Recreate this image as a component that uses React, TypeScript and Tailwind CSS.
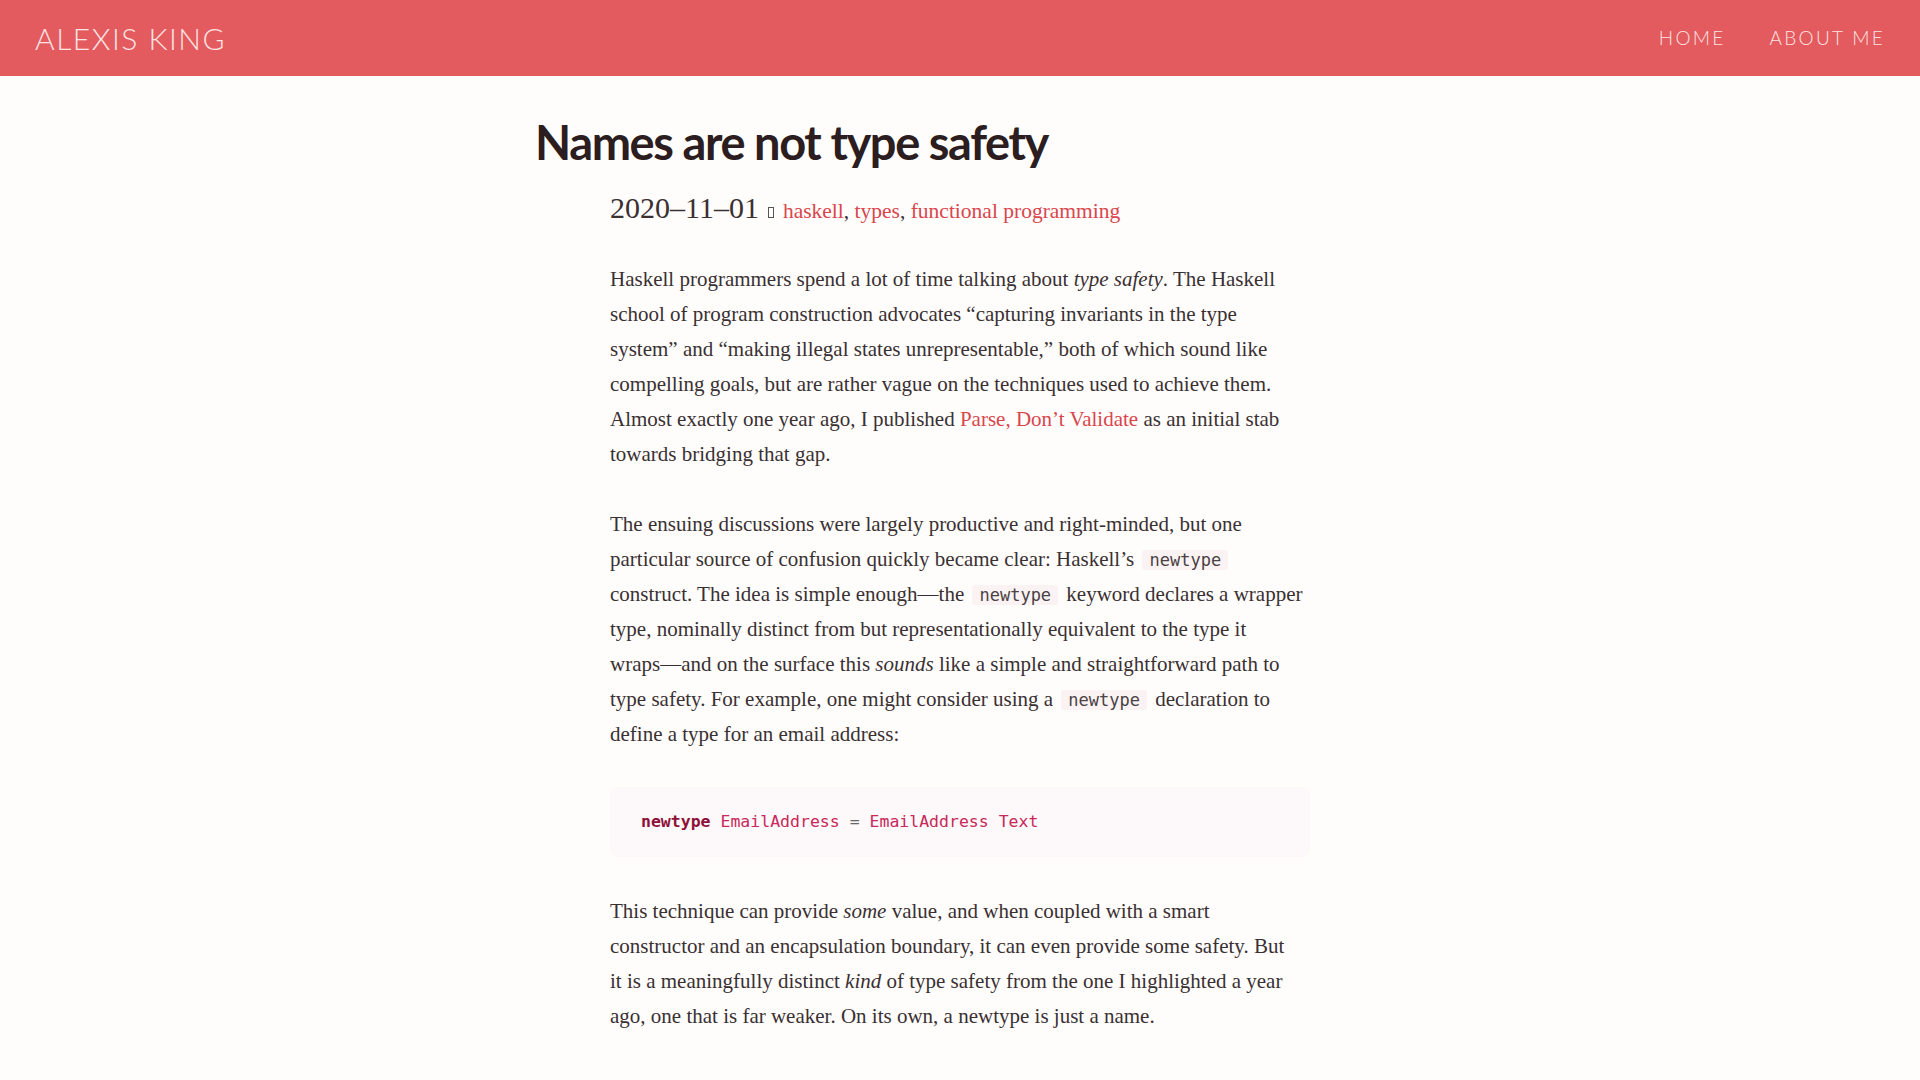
import React from 'react';

const serif = { fontFamily: '"Liberation Serif", "Times New Roman", serif' };

const Code: React.FC<{ children: React.ReactNode }> = ({ children }) => (
    <code className="mx-[3px] rounded-[3px] bg-[#fbf3f3] px-[7px] font-['DejaVu_Sans_Mono',monospace] text-[17px] leading-none text-[#4a4244]">
        {children}
    </code>
);

const Link: React.FC<{ children: React.ReactNode }> = ({ children }) => (
    <a href="#" className="text-[#d9464c] no-underline">{children}</a>
);

export default function App() {
    return (
        <div className="min-h-screen bg-[#fefdfc] text-[#3a3032]">
            {/* Header */}
            <header className="flex h-[76px] items-center justify-between bg-[#e35b5e] px-[35px] font-['Lato',sans-serif] text-[#fde3e3]">
                <a href="#" className="text-[30px] font-light tracking-[0.05em]">ALEXIS KING</a>
                <nav className="flex items-center gap-[44px] text-[19px] font-light tracking-[0.12em]">
                    <a href="#">HOME</a>
                    <a href="#">ABOUT ME</a>
                </nav>
            </header>

            <article className="mx-auto w-[700px] pt-[38px]">
                <h1 className="-ml-[75px] font-['Lato',sans-serif] text-[47px] leading-[56px] font-bold tracking-[-0.03em] text-[#2b1d20]">
                    Names are not type safety
                </h1>

                {/* Meta */}
                <div className="mt-[15px] flex items-baseline" style={serif}>
                    <span className="text-[30px] text-[#3a3032]">2020–11–01</span>
                    <span className="ml-[9px] mr-[9px] inline-block h-[11px] w-[6px] border border-[#555]" />
                    <span className="text-[21.5px]">
                        <Link>haskell</Link>, <Link>types</Link>, <Link>functional programming</Link>
                    </span>
                </div>

                <div className="mt-[32px] text-[21px] leading-[35px] whitespace-nowrap" style={serif}>
                    <p>
                        Haskell programmers spend a lot of time talking about <em>type safety</em>. The Haskell<br />
                        school of program construction advocates “capturing invariants in the type<br />
                        system” and “making illegal states unrepresentable,” both of which sound like<br />
                        compelling goals, but are rather vague on the techniques used to achieve them.<br />
                        Almost exactly one year ago, I published <Link>Parse, Don’t Validate</Link> as an initial stab<br />
                        towards bridging that gap.
                    </p>

                    <p className="mt-[35px]">
                        The ensuing discussions were largely productive and right-minded, but one<br />
                        particular source of confusion quickly became clear: Haskell’s <Code>newtype</Code><br />
                        construct. The idea is simple enough—the <Code>newtype</Code> keyword declares a wrapper<br />
                        type, nominally distinct from but representationally equivalent to the type it<br />
                        wraps—and on the surface this <em>sounds</em> like a simple and straightforward path to<br />
                        type safety. For example, one might consider using a <Code>newtype</Code> declaration to<br />
                        define a type for an email address:
                    </p>

                    {/* Code block */}
                    <pre className="mt-[35px] rounded-[8px] bg-[#fdf8f9] px-[31px] py-[23px] font-['DejaVu_Sans_Mono',monospace] text-[16.5px] leading-[24px]">
                        <span className="font-bold text-[#8f1038]">newtype</span>{' '}
                        <span className="text-[#c8285a]">EmailAddress</span>{' '}
                        <span className="text-[#666]">=</span>{' '}
                        <span className="text-[#c8285a]">EmailAddress</span>{' '}
                        <span className="text-[#c8285a]">Text</span>
                    </pre>

                    <p className="mt-[37px]">
                        This technique can provide <em>some</em> value, and when coupled with a smart<br />
                        constructor and an encapsulation boundary, it can even provide some safety. But<br />
                        it is a meaningfully distinct <em>kind</em> of type safety from the one I highlighted a year<br />
                        ago, one that is far weaker. On its own, a newtype is just a name.
                    </p>
                </div>

                <h2 className="-ml-[75px] mt-[42px] pb-[80px] font-['Lato',sans-serif] text-[34px] leading-[41px] font-bold text-[#2b1d20]">
                    Intrinsic and extrinsic safety
                </h2>
            </article>
        </div>
    );
}
